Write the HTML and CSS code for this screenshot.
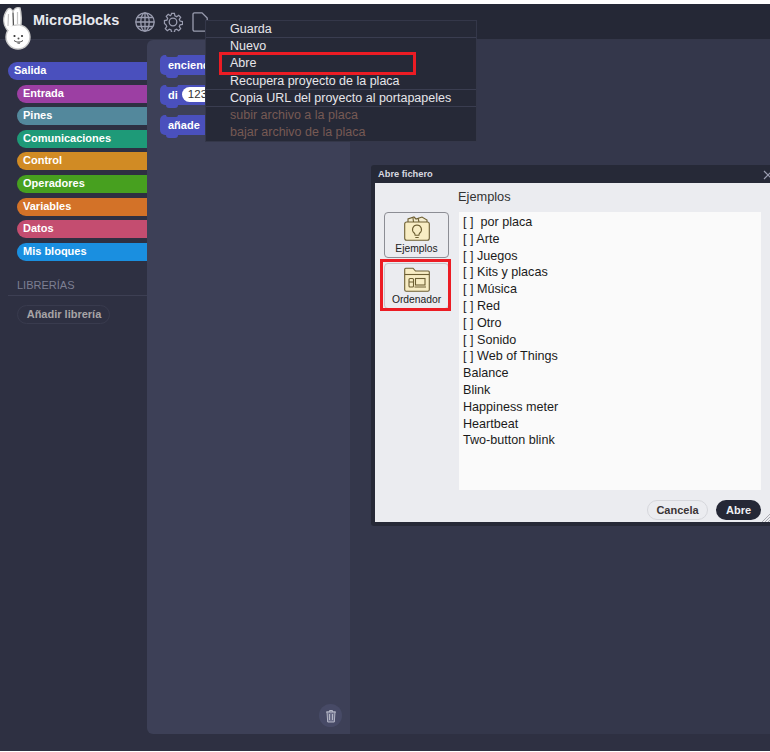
FILE: index.html
```html
<!DOCTYPE html>
<html lang="en">
<head>
    <meta charset="UTF-8">
    <meta name="viewport" content="width=device-width, initial-scale=1.0">
    <title>MicroBlocks</title>
    <link rel="stylesheet" href="styles.css">
</head>
<body>
    <div class="app">
        <header class="topbar">
            <svg class="logo" viewBox="0 0 36 48" width="36" height="48">
                <path d="M8 27C3 21 2 13 7.500 5.500 9.500 3.500 11.500 4.500 13 7.500 14.500 4.500 17 3 20 4c1.500 6 1.500 14 .5 21z" fill="#fff" stroke="#c9c9c9" stroke-width="1.400"/>
                <path d="M13 8.500L13.500 23" stroke="#555" stroke-width="1.300" fill="none"/>
                <path d="M8.500 10L8 22M17.500 8L17.500 20" stroke="#c4c4c4" stroke-width="1.200" fill="none"/>
                <ellipse cx="18" cy="33" rx="12" ry="12" fill="#fff" stroke="#c9c9c9" stroke-width="1.400"/>
                <path d="M8 22.500l12-1v4.500H8z" fill="#fff"/>
                <circle cx="14.500" cy="32" r="1.100" fill="#333"/>
                <circle cx="22" cy="32" r="1.100" fill="#333"/>
                <circle cx="18.500" cy="34.500" r="1" fill="#555"/>
                <path d="M14 36.500c3 2.200 6 2.200 9 0" stroke="#444" stroke-width="1" fill="none"/>
                <rect x="17.500" y="37.500" width="2.500" height="2.500" fill="#888"/>
            </svg>
            <span class="brand">MicroBlocks</span>
            <svg class="tool" viewBox="0 0 20 20" width="20" height="20">
                <circle cx="10" cy="10" r="9.200"/>
                <ellipse cx="10" cy="10" rx="4.200" ry="9.200"/>
                <path d="M10 .8v18.400M.8 10h18.400M2.300 5.500h15.400M2.300 14.500h15.400"/>
            </svg>
            <svg class="tool" viewBox="0 0 20 20" width="20" height="20">
                <circle cx="10" cy="10" r="3.800"/>
                <path d="M8.500 1h3l.5 2.600 1.800.8 2.200-1.500 2.100 2.100-1.500 2.200.8 1.800 2.600.5v3l-2.600.5-.8 1.800 1.500 2.200-2.100 2.100-2.200-1.500-1.800.8-.5 2.600h-3l-.5-2.600-1.800-.8-2.200 1.500-2.100-2.100 1.500-2.200-.8-1.800L1 11.500v-3l2.600-.5.8-1.800-1.500-2.200L5 1.900l2.200 1.500L8 2.600z" transform="translate(.5 .5) scale(.95)"/>
            </svg>
            <svg class="tool tool-file" viewBox="0 0 16 20" width="16" height="20">
                <path d="M2.500 .8h7.500l5.200 5.200v11.700a1.500 1.500 0 0 1-1.500 1.500H2.500A1.500 1.500 0 0 1 1 17.700V2.300A1.500 1.500 0 0 1 2.500 .8z"/>
            </svg>
        </header>

        <div class="workspace">
            <nav class="sidebar">
                <ul class="categories">
                    <li class="cat cat-first cat-salida">Salida</li>
                    <li class="cat cat-entrada">Entrada</li>
                    <li class="cat cat-pines">Pines</li>
                    <li class="cat cat-comunicaciones">Comunicaciones</li>
                    <li class="cat cat-control">Control</li>
                    <li class="cat cat-operadores">Operadores</li>
                    <li class="cat cat-variables">Variables</li>
                    <li class="cat cat-datos">Datos</li>
                    <li class="cat cat-mis">Mis bloques</li>
                </ul>
                <div class="lib-title">LIBRERÍAS</div>
                <button class="lib-add" type="button">Añadir librería</button>
            </nav>

            <section class="palette">
                <div class="block">enciende</div>
                <div class="block">di <span class="slot">123</span></div>
                <div class="block">añade</div>
                <div class="trash">
                    <svg viewBox="0 0 12 14" width="12" height="14">
                        <path d="M1 3h10M4.500 3V1.500h3V3"/>
                        <path class="trash-can" d="M2 3l.7 10h6.600L10 3z"/>
                        <path d="M4.500 5v6M7.500 5v6"/>
                    </svg>
                </div>
            </section>

            <section class="scripts"></section>
        </div>
        <div class="footer-band"></div>

        <div class="menu">
            <div class="menu-item menu-line">Guarda</div>
            <div class="menu-item">Nuevo</div>
            <div class="menu-item">Abre</div>
            <div class="menu-item menu-line">Recupera proyecto de la placa</div>
            <div class="menu-item menu-line">Copia URL del proyecto al portapapeles</div>
            <div class="menu-item menu-off">subir archivo a la placa</div>
            <div class="menu-item menu-off">bajar archivo de la placa</div>
        </div>
        <div class="mark mark-abre"></div>

        <div class="dialog">
            <div class="dialog-title">
                <span>Abre fichero</span>
                <svg class="dialog-close" viewBox="0 0 10 10" width="10" height="10"><path d="M1 1l8 8M9 1l-8 8"/></svg>
            </div>
            <div class="dialog-body">
                <div class="sources">
                    <div class="source source-on">
                        <svg class="source-icon" viewBox="0 0 26 25" width="26" height="25">
                            <path d="M4 6V3l6-2 2 2 6-2 5 3v2" fill="#f3ecd0"/>
                            <path d="M9.500 6L9 2M15 6l-1-4" fill="none"/>
                            <rect x=".7" y="6" width="24.600" height="18.300" rx="2" fill="#f8edc4"/>
                            <path d="M13 9a4.500 4.500 0 0 0-2.800 8c.6.6.9 1.300.9 2.200h3.800c0-.9.3-1.600.9-2.200A4.500 4.500 0 0 0 13 9zM11.300 21.500h3.400" fill="none"/>
                        </svg>
                        <span>Ejemplos</span>
                    </div>
                    <div class="source">
                        <svg class="source-icon" viewBox="0 0 26 25" width="26" height="25">
                            <path d="M.7 6V2.200q0-1 1-1h7.300l2.500 2.800h12.800q1 0 1 1v17.800q0 1.500-1.500 1.500H2.200q-1.500 0-1.500-1.500z" fill="#f8edc4"/>
                            <path d="M.7 7.500h24.600" fill="none"/>
                            <rect x="5" y="11.500" width="4.500" height="8.500" rx="1" fill="none"/>
                            <rect x="11.500" y="11.500" width="9.500" height="6.500" fill="none"/>
                            <path d="M10.500 20h11.500M5 15h4.500" fill="none"/>
                        </svg>
                        <span>Ordenador</span>
                    </div>
                </div>
                <div class="browser">
                    <div class="browser-title">Ejemplos</div>
                    <ul class="files">
                        <li>[ ]&nbsp; por placa</li>
                        <li>[ ] Arte</li>
                        <li>[ ] Juegos</li>
                        <li>[ ] Kits y placas</li>
                        <li>[ ] Música</li>
                        <li>[ ] Red</li>
                        <li>[ ] Otro</li>
                        <li>[ ] Sonido</li>
                        <li>[ ] Web of Things</li>
                        <li>Balance</li>
                        <li>Blink</li>
                        <li>Happiness meter</li>
                        <li>Heartbeat</li>
                        <li>Two-button blink</li>
                    </ul>
                    <div class="actions">
                        <button class="btn btn-light" type="button">Cancela</button>
                        <button class="btn btn-dark" type="button">Abre</button>
                    </div>
                </div>
            </div>
        </div>
        <svg class="resize-grip" viewBox="0 0 9 8" width="9" height="8"><path d="M0 8l8-8M3 8l6-6M6 8l3-3"/></svg>
        <div class="mark mark-source"></div>
    </div>
</body>
</html>
```

FILE: styles.css
```css
* {
    box-sizing: border-box;
}
html, body {
    margin: 0;
    padding: 0;
    height: 100%;
    overflow: hidden;
}
body {
    font-family: "Liberation Sans", Arial, sans-serif;
    background-color: #ffffff;
}
.app {
    position: relative;
    width: 770px;
    height: 747px;
    margin-top: 4px;
    display: flex;
    flex-direction: column;
    background-color: #2e3042;
    overflow: hidden;
}

/* top bar */
.topbar {
    height: 36px;
    flex: none;
    display: flex;
    align-items: center;
    padding-left: 33px;
    background-color: #252836;
    border-bottom: 1px solid #343749;
}
.logo {
    position: absolute;
    left: 0;
    top: 0;
}
.brand {
    width: 102px;
    margin-top: -3px;
    color: #e8e9ef;
    font-size: 14.500px;
    font-weight: bold;
}
.tool {
    margin-right: 8px;
    margin-top: 1px;
}
.tool-file {
    margin-left: 1px;
}
.tool * {
    fill: none;
    stroke: #9a9db0;
    stroke-width: 1.300;
}

/* left column */
.workspace {
    flex: 1;
    display: flex;
}
.sidebar {
    width: 147px;
    flex: none;
    padding: 22px 0 0 8px;
}
.categories {
    list-style: none;
    margin: 0;
    padding: 0;
    display: flex;
    flex-direction: column;
    gap: 4.600px;
}
.cat {
    height: 18px;
    margin-left: 9px;
    padding-left: 6px;
    border-radius: 9px 0 0 9px;
    color: #ffffff;
    font-size: 11px;
    font-weight: bold;
    line-height: 17px;
}
.cat-first {
    margin-left: 0;
}
.cat-salida { background-color: #4a50bd; }
.cat-entrada { background-color: #9c3fa3; }
.cat-pines { background-color: #53889c; }
.cat-comunicaciones { background-color: #1e9a78; }
.cat-control { background-color: #d18b24; }
.cat-operadores { background-color: #47a01f; }
.cat-variables { background-color: #d37228; }
.cat-datos { background-color: #c44d70; }
.cat-mis { background-color: #1a8fe0; }
.lib-title {
    margin: 18px 0 0 9px;
    padding-bottom: 4px;
    color: #7d7f92;
    font-size: 11px;
}
.lib-add {
    display: block;
    width: 93px;
    height: 19px;
    margin: 10px 0 0 9px;
    padding: 0 0 0 1px;
    color: #a8a4a6;
    font-family: inherit;
    font-size: 11px;
    font-weight: bold;
    background: transparent;
    border: 1px solid #393b4e;
    border-radius: 10px;
}
.sidebar::after {
    content: "";
    position: absolute;
    left: 8px;
    top: 291px;
    width: 139px;
    height: 1px;
    background-color: #3d3f53;
}

/* palette and scripts */
.palette {
    position: relative;
    width: 203px;
    flex: none;
    padding: 15px 0 0 13px;
    background-color: #3d4057;
    border-radius: 6px 0 0 6px;
}
.scripts {
    flex: 1;
    background-color: #34374b;
}
.block {
    position: relative;
    width: 90px;
    height: 20px;
    margin-bottom: 10px;
    padding-left: 8px;
    color: #ffffff;
    font-size: 11px;
    font-weight: bold;
    line-height: 20px;
    background-color: #4a50bd;
    border-radius: 5px;
}
.block::before {
    content: "";
    position: absolute;
    left: 6px;
    top: 0;
    width: 12px;
    height: 2px;
    background-color: #3d4057;
    border-radius: 0 0 3px 3px;
}
.block::after {
    content: "";
    position: absolute;
    left: 6px;
    bottom: -2.500px;
    width: 12px;
    height: 3px;
    background-color: #4a50bd;
    border-radius: 0 0 3px 3px;
}
.slot {
    display: inline-block;
    height: 15px;
    margin-left: 1px;
    padding: 0 6px;
    color: #333333;
    font-size: 11.500px;
    font-weight: normal;
    line-height: 15px;
    vertical-align: 1px;
    background-color: #ffffff;
    border-radius: 7.500px;
}
.trash {
    position: absolute;
    right: 8px;
    bottom: 7px;
    width: 23px;
    height: 23px;
    display: flex;
    align-items: center;
    justify-content: center;
    background-color: #474a66;
    border-radius: 50%;
}
.trash svg {
    fill: none;
    stroke: #b4b6c6;
    stroke-width: 1;
}
.trash-can {
    fill: #6a6d88;
}
.footer-band {
    height: 17px;
    flex: none;
}

/* file menu */
.menu {
    position: absolute;
    left: 205px;
    top: 16px;
    width: 272px;
    padding: 0 0 0 24px;
    background-color: #262937;
    border: 1px solid #343749;
    color: #e6e6ea;
    font-size: 12.500px;
}
.menu-item {
    height: 17.200px;
    line-height: 16px;
}
.menu-line {
    margin-left: -24px;
    padding-left: 24px;
    border-bottom: 1px solid #3a3d50;
}
.menu-off {
    color: #775a54;
}
.mark {
    position: absolute;
    border: 3px solid #ec1c24;
}
.mark-abre {
    left: 219px;
    top: 48px;
    width: 197px;
    height: 23px;
}
.mark-source {
    left: 380px;
    top: 255px;
    width: 71px;
    height: 52px;
}

/* open dialog */
.dialog {
    position: absolute;
    left: 371px;
    top: 161px;
    width: 420px;
    height: 361px;
    display: flex;
    flex-direction: column;
    background-color: #262937;
    border-radius: 3px 0 0 3px;
}
.dialog-title {
    height: 18px;
    flex: none;
    padding-left: 7px;
    color: #d8d9e0;
    font-size: 9.300px;
    font-weight: bold;
    line-height: 18px;
}
.dialog-close {
    position: absolute;
    left: 392px;
    top: 5px;
    fill: none;
    stroke: #9a9db0;
    stroke-width: 1.200;
}
.dialog-body {
    display: flex;
    height: 339px;
    margin-left: 4px;
    background-color: #ebecf0;
}
.sources {
    width: 84px;
    padding: 29px 0 0 9px;
    display: flex;
    flex-direction: column;
    gap: 5px;
}
.source {
    width: 65px;
    height: 46px;
    padding-top: 3px;
    display: flex;
    flex-direction: column;
    align-items: center;
    gap: 2px;
    color: #222222;
    font-size: 10.300px;
    line-height: 11px;
    border: 1px solid #c5c6cb;
    border-radius: 4px;
}
.source-on {
    border-color: #8c8d94;
}
.source-icon {
    flex: none;
    stroke: #6d5f33;
    stroke-width: 1.100;
}
.browser {
    width: 302px;
}
.browser-title {
    height: 29px;
    margin-left: -1px;
    color: #333333;
    font-size: 12.800px;
    line-height: 28px;
}
.files {
    list-style: none;
    height: 278px;
    margin: 0;
    padding: 2px 0 0 4px;
    color: #1a1a1a;
    font-size: 12.600px;
    line-height: 16.800px;
    background-color: #fafafa;
}
.actions {
    display: flex;
    justify-content: flex-end;
    gap: 8px;
    margin-top: 10px;
}
.btn {
    height: 20px;
    padding: 0;
    font-family: inherit;
    font-size: 11px;
    font-weight: bold;
    border-radius: 10px;
}
.btn-light {
    width: 61px;
    color: #3a3436;
    background-color: #ebecf0;
    border: 1px solid #d6d7dc;
}
.btn-dark {
    width: 45px;
    color: #f0f0f4;
    background-color: #252836;
    border: none;
}
.resize-grip {
    position: absolute;
    left: 762px;
    top: 510px;
    fill: none;
    stroke: #a8a9b0;
    stroke-width: 1;
}
```
